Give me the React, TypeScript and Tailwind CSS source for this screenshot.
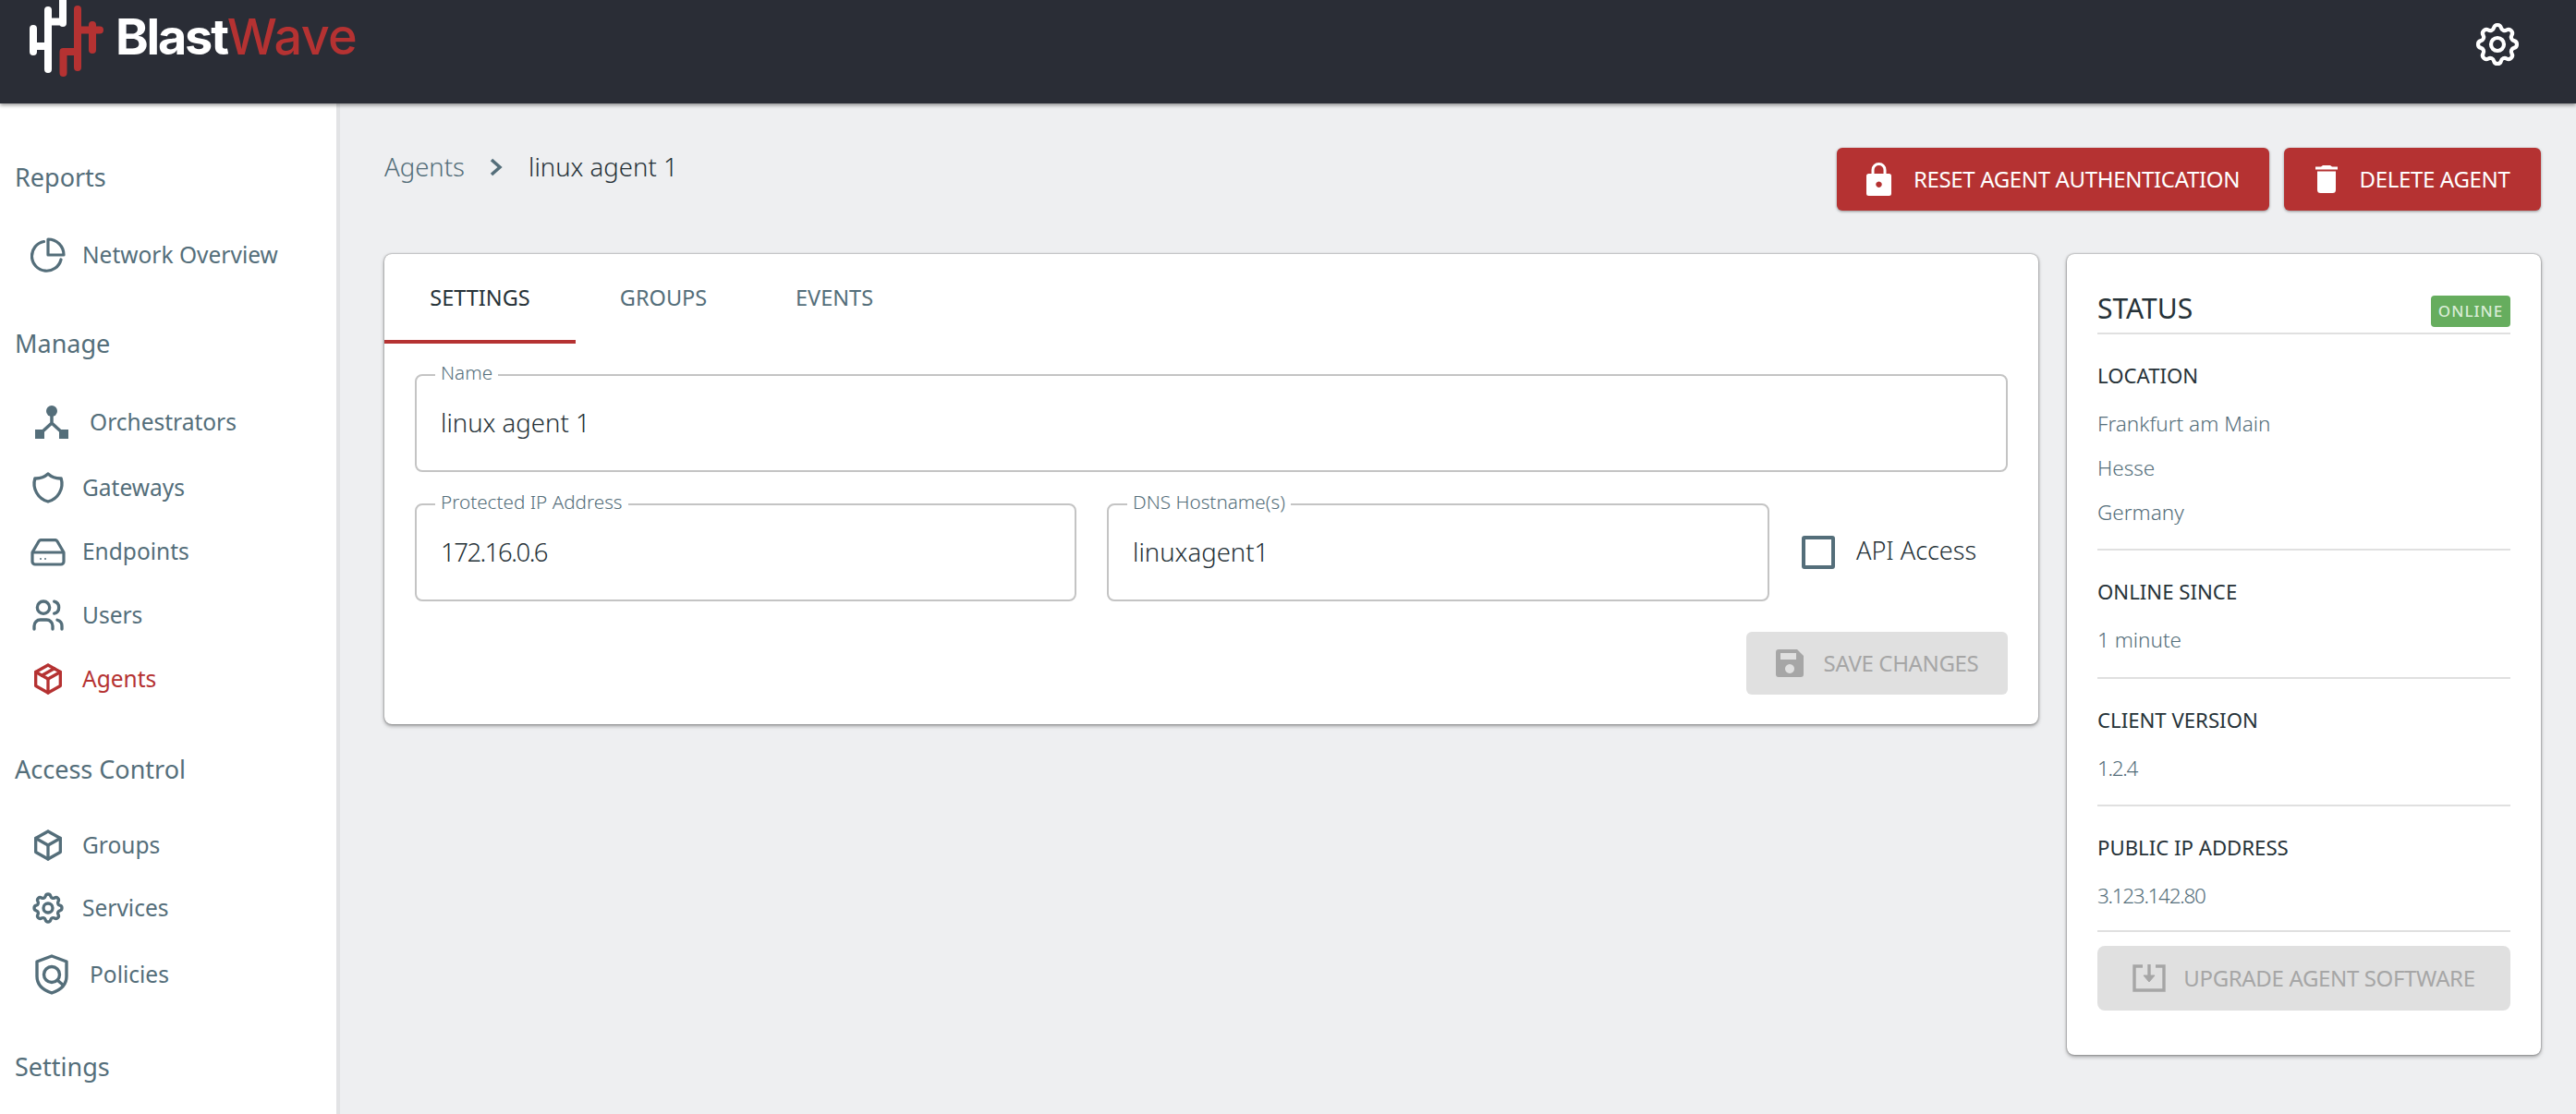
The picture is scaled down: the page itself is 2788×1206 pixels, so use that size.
import React from "react";
import { TbShield, TbUsers, TbPackage, TbBox, TbSettings } from "react-icons/tb";

const font = "font-['Noto_Sans',sans-serif]";

function Logo() {
  return (
    <div className="flex items-start">
      <svg width="84" height="84" viewBox="32 0 84 84" className="shrink-0">
        <g fill="none" strokeLinecap="round" strokeWidth="8">
          <path stroke="#fff" d="M36 31V56M36 50H52M52 11V75M52 23.500H68M68 -4V25" />
          <path stroke="#b53232" d="M68.500 56V79M68.500 56H84M84 10V73M84 32.500H108M100 27V54" />
        </g>
      </svg>
      <div className="ml-[9px] mt-[8px] flex font-['Inter',sans-serif] text-[54px] leading-[64px]">
        <span className="font-bold tracking-[-2.2px] text-white">Blast</span>
        <span className="font-medium tracking-[-0.6px] text-[#b53232]">Wave</span>
      </div>
    </div>
  );
}

function Pie() {
  return (
    <svg width="38" height="38" viewBox="0 0 38 38" fill="none" stroke="#546e7a" strokeWidth="3.2" strokeLinecap="round" strokeLinejoin="round">
      <path d="M14.500 4.500A16 16 0 1 0 33 24" />
      <path d="M19 2A17 17 0 0 1 36 19H19Z" />
    </svg>
  );
}

function Orchestrator() {
  return (
    <svg width="36" height="36" viewBox="0 0 36 36" fill="#546e7a">
      <circle cx="18" cy="6" r="6" />
      <rect x="0" y="26" width="10" height="10" />
      <rect x="26" y="26" width="10" height="10" />
      <path d="M18 10V19M18 19L6 30M18 19L30 30" stroke="#546e7a" strokeWidth="3.5" fill="none" />
    </svg>
  );
}

function Drive() {
  return (
    <svg width="38" height="30" viewBox="0 0 38 30" fill="none" stroke="#546e7a" strokeWidth="3.2" strokeLinejoin="round">
      <path d="M2 15L9 3a3 3 0 0 1 2-1.400H27a3 3 0 0 1 2 1.400L36 15V25a3 3 0 0 1-3 3H5a3 3 0 0 1-3-3Z" />
      <path d="M2 15H36" />
      <circle cx="11" cy="22" r="1" fill="#546e7a" stroke="none" />
      <circle cx="16" cy="22" r="1" fill="#546e7a" stroke="none" />
    </svg>
  );
}

function ShieldSearch() {
  return (
    <svg width="36" height="44" viewBox="0 0 36 44" fill="none" stroke="#546e7a" strokeWidth="3.400" strokeLinejoin="round">
      <path d="M18 2L34 8V24C34 33 27 39 18 42C9 39 2 33 2 24V8Z" />
      <circle cx="18" cy="22" r="8.500" />
      <path d="M24 28L31 34" />
    </svg>
  );
}

type Item = { label: string; icon: React.ReactNode; h: number; offset?: boolean; active?: boolean };

function NavItem({ label, icon, h, offset, active }: Item) {
  return (
    <div className={`flex items-center ${offset ? "pl-[38px]" : "pl-[32px]"}`} style={{ height: h }}>
      <span className={`flex items-center justify-center ${offset ? "w-[36px] mr-[23px]" : "w-[40px] mr-[17px]"}`}>{icon}</span>
      <span className={`text-[24.500px] ${active ? "text-[#b53232]" : "text-[#546e7a]"}`}>{label}</span>
    </div>
  );
}

function Section({ children, mt }: { children: React.ReactNode; mt: string }) {
  return <div className={`pl-[16px] text-[27px] leading-[40px] text-[#546e7a] ${mt}`}>{children}</div>;
}

function Sidebar() {
  const ic = "text-[#546e7a]";
  return (
    <aside className="w-[368px] shrink-0 border-r-[4px] border-[#e2e3e5] bg-white pt-[60px]">
      <Section mt="">Reports</Section>
      <div className="mt-[34px]">
        <NavItem label="Network Overview" h={60} icon={<Pie />} />
      </div>
      <Section mt="mt-[46px]">Manage</Section>
      <div className="mt-[29px]">
        <NavItem label="Orchestrators" h={72} offset icon={<Orchestrator />} />
        <NavItem label="Gateways" h={70} icon={<TbShield size={44} className={ic} />} />
        <NavItem label="Endpoints" h={69} icon={<Drive />} />
        <NavItem label="Users" h={68} icon={<TbUsers size={44} className={ic} />} />
        <NavItem label="Agents" h={70} active icon={<TbPackage size={44} className="text-[#b53232]" />} />
      </div>
      <Section mt="mt-[43px]">Access Control</Section>
      <div className="mt-[28px]">
        <NavItem label="Groups" h={68} icon={<TbBox size={44} className={ic} />} />
        <NavItem label="Services" h={68} icon={<TbSettings size={44} className={ic} />} />
        <NavItem label="Policies" h={76} offset icon={<ShieldSearch />} />
      </div>
      <Section mt="mt-[42px]">Settings</Section>
    </aside>
  );
}

function Lock() {
  return (
    <svg width="27" height="36" viewBox="0 0 27 36">
      <path fill="none" stroke="#fff" strokeWidth="3" d="M7 14V8a6.500 6.500 0 0 1 13 0V14" />
      <path fill="#fff" fillRule="evenodd" d="M2.500 12H24.500a2.500 2.500 0 0 1 2.500 2.500V33.500a2.500 2.500 0 0 1-2.500 2.500H2.500a2.500 2.500 0 0 1-2.500-2.500V14.500a2.500 2.500 0 0 1 2.500-2.500ZM13.500 20.500a3.200 3.200 0 1 0 .01 0Z" />
    </svg>
  );
}

function Trash() {
  return (
    <svg width="24" height="30" viewBox="0 0 24 30" fill="#fff">
      <path d="M8 0H16L18 1.500H24V4.500H0V1.500H6Z" />
      <path d="M2 6.500H22V26.500a3.500 3.500 0 0 1-3.500 3.500H5.500A3.500 3.500 0 0 1 2 26.500Z" />
    </svg>
  );
}

function Save() {
  return (
    <svg width="30" height="30" viewBox="0 0 30 30">
      <path fill="#a6a6a6" fillRule="evenodd" d="M3 0H23L30 7V27a3 3 0 0 1-3 3H3a3 3 0 0 1-3-3V3A3 3 0 0 1 3 0ZM5 4V11H22V4ZM15 16a5 5 0 1 0 .01 0Z" />
    </svg>
  );
}

function Upgrade() {
  return (
    <svg width="36" height="30" viewBox="0 0 36 30" fill="none" stroke="#a6a6a6" strokeWidth="3.400">
      <path d="M11 2H2V28H34V2H25" />
      <path d="M18 0V17" />
      <path d="M12 12L18 19L24 12Z" fill="#a6a6a6" strokeWidth="1" />
    </svg>
  );
}

function RedButton({ icon, label, w }: { icon: React.ReactNode; label: string; w: string }) {
  return (
    <div className={`flex h-[68px] items-center justify-center gap-[24px] rounded-[6px] bg-[#b53232] text-[24px] tracking-[-0.35px] text-white shadow-[0_1px_3px_rgba(0,0,0,0.4)] ${w}`}>
      {icon}
      <span>{label}</span>
    </div>
  );
}

function Field({ label, value, className, valueClass }: { label: string; value: string; className?: string; valueClass?: string }) {
  return (
    <fieldset className={`h-[118px] rounded-[8px] border-2 border-[#c4c4c4] px-[20px] ${className ?? ""}`}>
      <legend className="px-[6px] pb-[6px] text-[20.700px] font-light leading-[20px] text-[#546e7a]">{label}</legend>
      <div className={`mt-[21px] pl-[6px] text-[27.500px] font-light leading-[36px] text-[#263238] ${valueClass ?? ""}`}>{value}</div>
    </fieldset>
  );
}

function Info({ title, lines, pb, numeric }: { title: string; lines: string[]; pb: string; numeric?: boolean }) {
  return (
    <div className={`border-b-2 border-[#e0e0e0] pt-[30px] ${pb}`}>
      <div className="text-[22.200px] leading-[30px] text-[#263238]">{title}</div>
      <div className="mt-[13px]">
        {lines.map((l) => (
          <div key={l} className={`h-[48px] text-[22.500px] font-light leading-[48px] text-[#546e7a] ${numeric ? "tracking-[-1.3px]" : ""}`}>{l}</div>
        ))}
      </div>
    </div>
  );
}

export default function App() {
  return (
    <div className={`flex h-[1206px] w-[2788px] flex-col overflow-hidden bg-[#eeeff1] ${font}`}>
      <header className="relative z-10 flex h-[112px] shrink-0 items-start justify-between bg-[#2a2d36] pl-[32px] pr-[57px] shadow-[0_2px_4px_rgba(0,0,0,0.4)]">
        <Logo />
        <TbSettings size={56} strokeWidth={1.8} className="mt-[20px] text-white" />
      </header>
      <div className="flex min-h-0 flex-1">
        <Sidebar />
        <main className="min-w-0 flex-1 pl-[48px] pr-[38px]">
          <div className="flex items-start justify-between pt-[48px]">
            <div className="flex items-center pt-[1px] text-[27.500px] font-light leading-[40px]">
              <span className="text-[#546e7a]">Agents</span>
              <svg width="14" height="20" viewBox="0 0 14 20" fill="none" stroke="#546e7a" strokeWidth="3.500" className="ml-[27px] mr-[28px]">
                <path d="M2 2L11 10L2 18" />
              </svg>
              <span className="text-[#263238]">linux agent 1</span>
            </div>
            <div className="flex gap-[16px]">
              <RedButton w="w-[468px]" icon={<Lock />} label="RESET AGENT AUTHENTICATION" />
              <RedButton w="w-[278px]" icon={<Trash />} label="DELETE AGENT" />
            </div>
          </div>
          <div className="mt-[47px] flex items-start gap-[31px]">
            <section className="h-[509px] w-[1790px] shrink-0 overflow-hidden rounded-[8px] bg-white shadow-[0_0_2px_rgba(0,0,0,0.5),0_2px_4px_rgba(0,0,0,0.35)]">
              <div className="flex h-[97px] items-stretch text-[23.500px]">
                <div className="flex w-[207px] items-center justify-center border-b-[4px] border-[#b53232] pt-[2px] text-[#263238]">SETTINGS</div>
                <div className="flex w-[190px] items-center justify-center pb-[2px] text-[#546e7a]">GROUPS</div>
                <div className="flex w-[180px] items-center justify-center pb-[2px] text-[#546e7a]">EVENTS</div>
              </div>
              <div className="px-[33px] pt-[21px]">
                <Field label="Name" value="linux agent 1" />
                <div className="mt-[22px] flex items-center">
                  <Field label="Protected IP Address" value="172.16.0.6" className="w-[716px]" valueClass="tracking-[-1.500px]" />
                  <Field label="DNS Hostname(s)" value="linuxagent1" className="ml-[33px] w-[717px]" />
                  <div className="ml-[35px] mt-[12px] h-[36px] w-[36px] rounded-[3px] border-[4px] border-[#546e7a]" />
                  <span className="ml-[23px] mt-[8px] text-[27px] font-light text-[#263238]">API Access</span>
                </div>
                <div className="mt-[33px] flex justify-end">
                  <div className="flex h-[68px] w-[283px] items-center justify-center gap-[22px] rounded-[6px] bg-[#e0e0e0] text-[24px] tracking-[-0.35px] text-[#a6a6a6]">
                    <Save />
                    <span>SAVE CHANGES</span>
                  </div>
                </div>
              </div>
            </section>
            <section className="h-[867px] w-[513px] shrink-0 rounded-[8px] bg-white px-[33px] shadow-[0_0_2px_rgba(0,0,0,0.5),0_2px_4px_rgba(0,0,0,0.35)]">
              <div className="flex h-[87px] items-end justify-between border-b-2 border-[#e0e0e0] pb-[6px]">
                <span className="text-[30px] leading-[40px] text-[#263238]">STATUS</span>
                <span className="flex h-[34px] w-[86px] items-center justify-center rounded-[4px] bg-[#66ad5e] text-[17px] font-medium tracking-[1px] text-[#d9ecd6]">ONLINE</span>
              </div>
              <Info title="LOCATION" pb="pb-[15px]" lines={["Frankfurt am Main", "Hesse", "Germany"]} />
              <Info title="ONLINE SINCE" pb="pb-[16px]" lines={["1 minute"]} />
              <Info title="CLIENT VERSION" pb="pb-[15px]" numeric lines={["1.2.4"]} />
              <Info title="PUBLIC IP ADDRESS" pb="pb-[13px]" numeric lines={["3.123.142.80"]} />
              <div className="mt-[15px] flex h-[70px] items-center justify-center gap-[19px] rounded-[8px] bg-[#e0e0e0] text-[24px] tracking-[-0.35px] text-[#a6a6a6]">
                <Upgrade />
                <span>UPGRADE AGENT SOFTWARE</span>
              </div>
            </section>
          </div>
        </main>
      </div>
    </div>
  );
}
